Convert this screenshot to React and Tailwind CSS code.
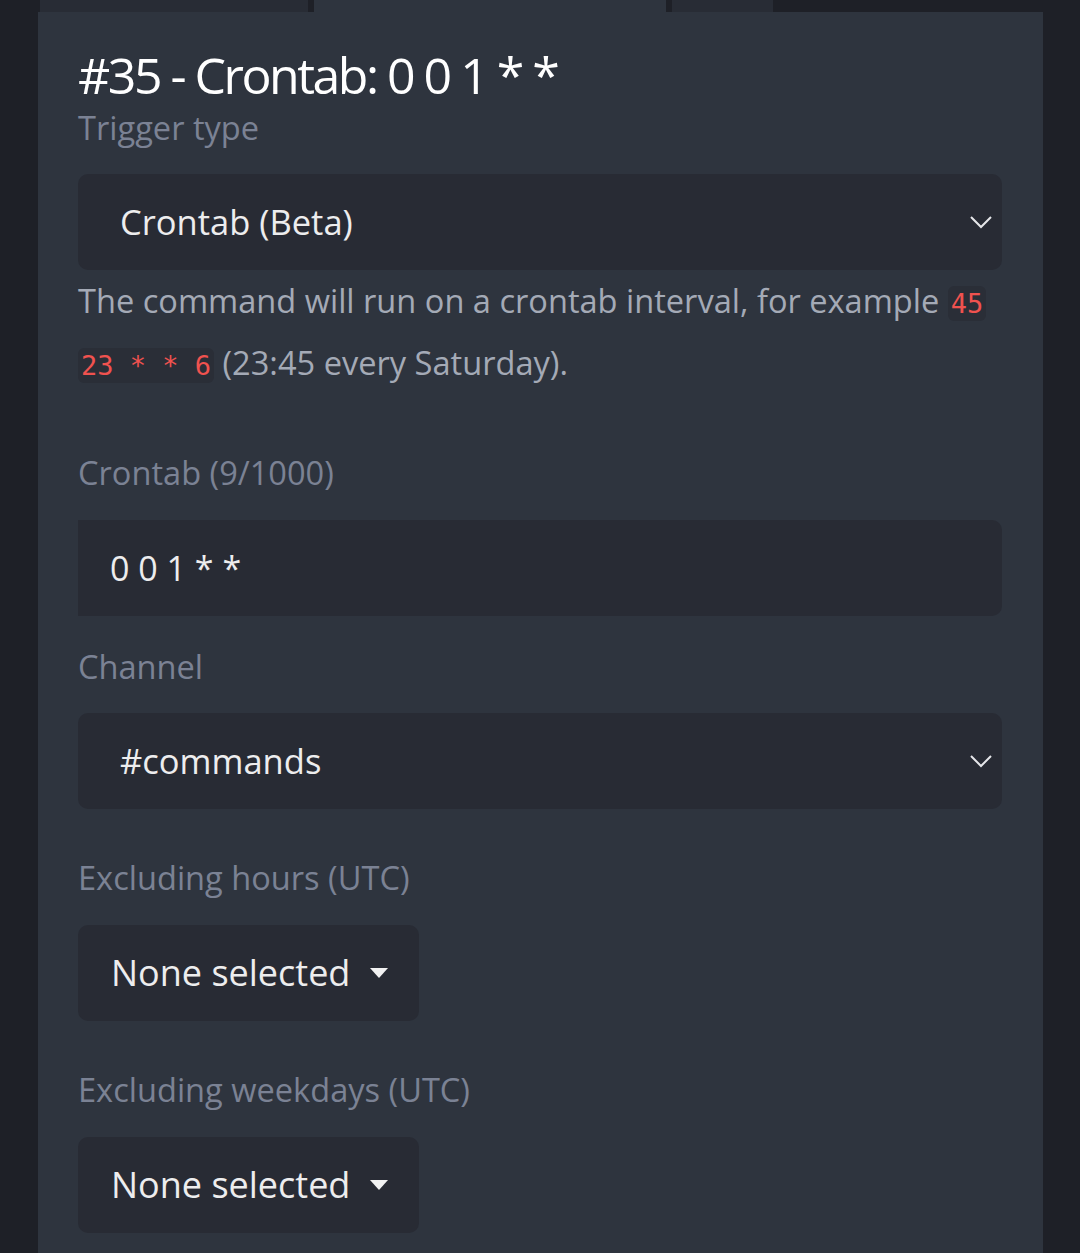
import React from 'react';

const Label = ({ children, className = '' }) => (
    <div className={`text-[32.6px] leading-[40px] text-[#7b8294] ${className}`}>{children}</div>
);

const Chevron = () => (
    <svg width="22" height="14" viewBox="0 0 22 14" fill="none" stroke="#e6e7ea" strokeWidth="2">
        <path d="M1 2 L11 12 L21 2" />
    </svg>
);

const Caret = () => (
    <svg width="18" height="10" viewBox="0 0 18 10" fill="#f2f2f2">
        <path d="M0 0 H18 L9 10 Z" />
    </svg>
);

const Select = ({ value }) => (
    <div className="h-[96px] rounded-[10px] bg-[#282b34] flex items-center justify-between pl-[42px] pr-[10px]">
        <span className="text-[34.5px] text-[#ededee]">{value}</span>
        <Chevron />
    </div>
);

const MultiSelect = () => (
    <div className="h-[96px] w-[341px] rounded-[10px] bg-[#282b34] flex items-center pl-[33px] gap-[20px]">
        <span className="text-[36px] text-[#ededee]">None selected</span>
        <Caret />
    </div>
);

const Code = ({ children }) => (
    <code className="font-['DejaVu_Sans_Mono',monospace] text-[27px] leading-[20px] text-[#f0524f] bg-[#2a2e37] rounded-[6px] px-[3px] py-[2px]">
        {children}
    </code>
);

export default function App() {
    return (
        <div className="min-h-[1253px] bg-[#1e2027] font-['Open_Sans',sans-serif]">
            {/* sekmeler */}
            <div className="flex h-[12px] pl-[40px] gap-[6px]">
                <div className="w-[268px] bg-[#282c35]" />
                <div className="w-[352px] bg-[#2e343e]" />
                <div className="w-[101px] bg-[#282c35]" />
            </div>

            <div className="ml-[38px] w-[1005px] min-h-[1241px] bg-[#2e343e] pl-[40px] pr-[41px] pt-[35px]">
                <h1 className="text-[50px] leading-[56px] tracking-[-2.5px] text-white">#35 - Crontab: 0 0 1 * *</h1>

                <Label className="mt-[5px] mb-[26px]">Trigger type</Label>
                <Select value="Crontab (Beta)" />

                <p className="text-[32.6px] leading-[62px] text-[#a4aab6]">
                    The command will run on a crontab interval, for example <Code>45</Code>
                    <br />
                    <Code>23 * * 6</Code> (23:45 every Saturday).
                </p>

                <Label className="mt-[59px] mb-[27px]">Crontab (9/1000)</Label>
                <div className="h-[96px] rounded-r-[10px] bg-[#282b34] flex items-center pl-[32px]">
                    <span className="text-[34px] text-[#ededee]">0 0 1 * *</span>
                </div>

                <Label className="mt-[31px] mb-[26px]">Channel</Label>
                <Select value="#commands" />

                <Label className="mt-[49px] mb-[27px]">Excluding hours (UTC)</Label>
                <MultiSelect />

                <Label className="mt-[49px] mb-[27px]">Excluding weekdays (UTC)</Label>
                <MultiSelect />
            </div>
        </div>
    );
}
